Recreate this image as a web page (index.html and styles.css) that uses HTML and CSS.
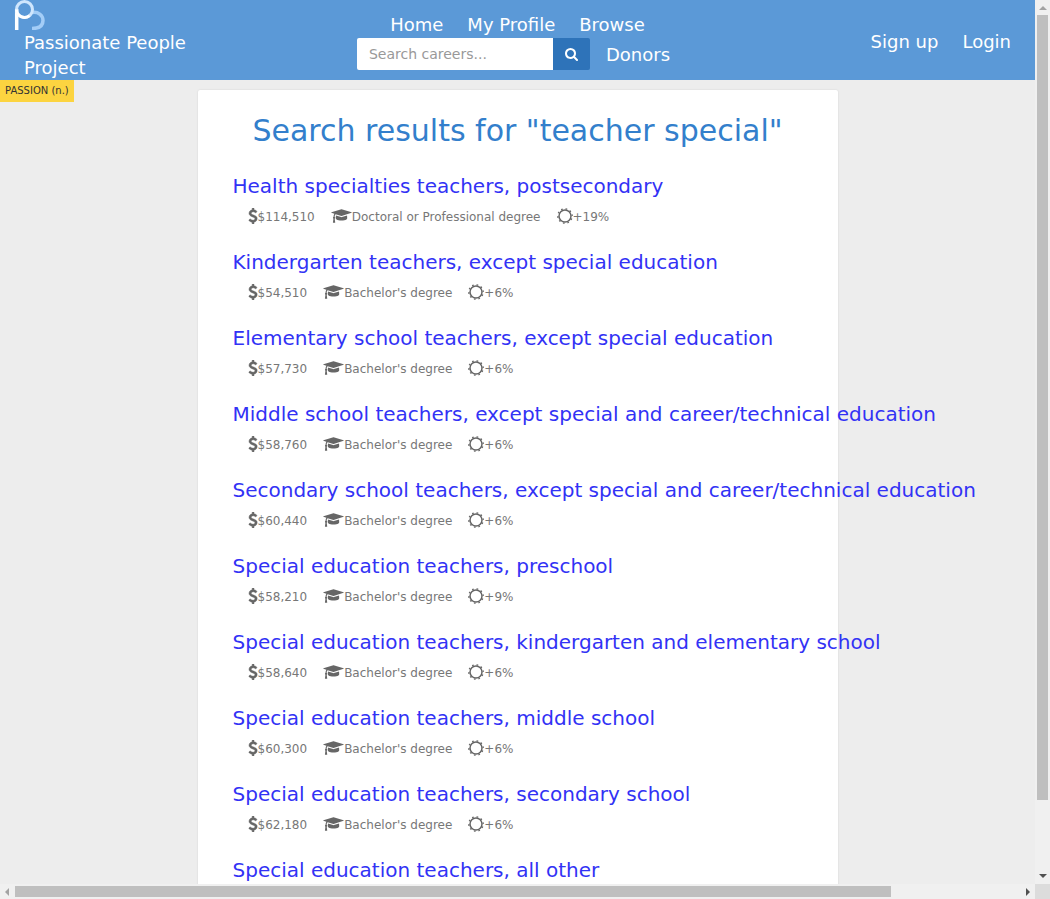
FILE: index.html
```html
<!DOCTYPE html>
<html lang="en">
<head>
<meta charset="utf-8">
<title>Passionate People Project</title>
<link rel="stylesheet" href="styles.css">
</head>
<body>
<svg class="sprite" aria-hidden="true">
  <symbol id="dollar" viewBox="0 0 1024 1792"><path stroke="currentColor" stroke-width="50" d="M978 1185q0 153-99.500 263.500T620 1585v175q0 14-9 23t-23 9H453q-13 0-22.500-9.500T421 1760v-175q-66-9-127.500-31T192 1509.500t-74-48-46.500-37.500T54 1406q-17-21-2-41l103-135q7-10 23-12 15-2 24 9l2 2q113 99 243 125 37 8 74 8 81 0 142.500-43t61.500-122q0-28-15-53t-33.500-42-58.500-37.500-66-32-80-32.500q-39-16-61.500-25T349 942.500 286.500 911 230 875.500t-53.500-42.500-43.500-49-35.500-58-21-66.500T68 581q0-138 98-242t255-134V32q0-13 9.500-22.500T453 0h135q14 0 23 9t9 23v176q57 6 110.500 23t87 33.500T881 302t39 29 15 14q17 18 5 38l-81 146q-8 15-23 16-14 3-27-7-3-3-14.500-12t-39-26.500-58.500-32-74.500-26T537 430q-95 0-155 43t-60 111q0 26 8.500 48t29.500 41.500 39.500 33 56 31 60.500 27 70 27.500q53 20 81 31.500t76 35 75.500 42.500 62 50 53 63.500 31.500 76.500 13 94z"/></symbol>
  <symbol id="cap" viewBox="0 0 2304 1792"><path d="M1774 836l18 316q4 69-82 128t-235 93.500-323 34.500-323-34.500T594 1280t-82-128l18-316 574 181q22 7 48 7t48-7zm530-324q0 23-22 31l-1120 352q-4 1-10 1t-10-1L490 690q-43 34-71 111.500T385 980q63 36 63 109 0 69-58 107l58 433q2 14-8 25-9 11-24 11H224q-15 0-24-11-10-11-8-25l58-433q-58-38-58-107 0-73 65-111 11-207 98-330L22 543q-22-8-22-31t22-31L1142 129q4-1 10-1t10 1l1120 352q22 8 22 31z"/></symbol>
  <symbol id="sun" viewBox="0 0 16 16"><circle cx="8" cy="8" r="6" fill="none" stroke="currentColor" stroke-width="1.500"/><circle cx="8" cy="8" r="7.200" fill="none" stroke="currentColor" stroke-width="1.300" stroke-dasharray="1.700 2.824" stroke-dashoffset="1.980"/></symbol>
  <symbol id="search" viewBox="0 0 1664 1792"><path d="M1152 832q0-185-131.500-316.500T704 384 387.500 515.500 256 832t131.500 316.500T704 1280t316.500-131.500T1152 832zm512 832q0 52-38 90t-90 38q-54 0-90-38l-343-342q-179 124-399 124-143 0-273.500-55.500t-225-150-150-225T0 832t55.500-273.500 150-225 225-150T704 128t273.500 55.500 225 150 150 225T1408 832q0 220-124 399l343 343q37 37 37 90z"/></symbol>
</svg>
<div class="window">
  <div class="page">
    <header class="header">
      <a class="brand" href="#">
        <svg class="logo" viewBox="0 0 32 30" aria-hidden="true"><path d="M18 12.500c6-1 11 2.500 11 8s-4 8-11 8" fill="none" stroke="#a3cdf7" stroke-width="3.500"/><path d="M2.700 30V9" stroke="#fff" stroke-width="3.500"/><circle cx="10.500" cy="9.500" r="8" fill="none" stroke="#cfe6fd" stroke-width="3"/><path d="M2.500 9.500a8 8 0 0 0 13 6.200" fill="none" stroke="#fff" stroke-width="3"/></svg>
        <span class="brand-name">Passionate People Project</span>
      </a>
      <nav class="nav">
        <div class="nav-row"><a href="#">Home</a><a href="#">My Profile</a><a href="#">Browse</a></div>
        <div class="nav-row">
          <form class="search">
            <input type="text" placeholder="Search careers..." aria-label="Search careers">
            <button type="button" aria-label="Search"><svg class="icon-search"><use href="#search"/></svg></button>
          </form>
          <a href="#">Donors</a>
        </div>
      </nav>
      <div class="account"><a href="#">Sign up</a><a href="#">Login</a></div>
    </header>
    <div class="content">
      <span class="tag">PASSION (n.)</span>
      <main class="card">
        <h1>Search results for "teacher special"</h1>
        <ul class="results" id="results"></ul>
      </main>
    </div>
  </div>
  <div class="bar bar-v" aria-hidden="true"><i class="arrow up"></i><i class="thumb"></i><i class="arrow down"></i></div>
  <div class="bar bar-h" aria-hidden="true"><i class="arrow left"></i><i class="thumb"></i><i class="arrow right"></i></div>
  <div class="corner"></div>
</div>
<script src="results.js"></script>
</body>
</html>
```
FILE: results.js
```js
const results = [
  ["Health specialties teachers, postsecondary", "$114,510", "Doctoral or Professional degree", "+19%"],
  ["Kindergarten teachers, except special education", "$54,510", "Bachelor's degree", "+6%"],
  ["Elementary school teachers, except special education", "$57,730", "Bachelor's degree", "+6%"],
  ["Middle school teachers, except special and career/technical education", "$58,760", "Bachelor's degree", "+6%"],
  ["Secondary school teachers, except special and career/technical education", "$60,440", "Bachelor's degree", "+6%"],
  ["Special education teachers, preschool", "$58,210", "Bachelor's degree", "+9%"],
  ["Special education teachers, kindergarten and elementary school", "$58,640", "Bachelor's degree", "+6%"],
  ["Special education teachers, middle school", "$60,300", "Bachelor's degree", "+6%"],
  ["Special education teachers, secondary school", "$62,180", "Bachelor's degree", "+6%"],
  ["Special education teachers, all other", "", "", ""]
];
const fact = (icon, text) => text ? `<span class="fact"><svg class="icon ${icon}"><use href="#${icon}"/></svg>${text}</span>` : "";
document.getElementById("results").innerHTML = results.map(([title, pay, degree, growth]) =>
  `<li><a class="title" href="#">${title}</a><div class="facts">${fact("dollar", pay)}${fact("cap", degree)}${fact("sun", growth)}</div></li>`
).join("");
```
FILE: styles.css
```css
* { box-sizing: border-box; }
body { margin: 0; font-family: "DejaVu Sans", sans-serif; background: #ededed; }
a { text-decoration: none; color: inherit; }
.sprite { position: absolute; width: 0; height: 0; }
.window { display: grid; grid-template: minmax(0, 1fr) 15px / minmax(0, 1fr) 15px; height: 100vh; overflow: hidden; }
.page { overflow: hidden; }

.header { display: grid; grid-template-columns: 1fr auto 1fr; height: 80px; background: #5b99d7; color: #fff; font-size: 18px; }
.brand { justify-self: start; width: 230px; }
.logo { display: block; width: 32px; height: 30px; margin-left: 14px; }
.brand-name { display: block; padding: 0 24px; line-height: 25px; }
.nav { padding-top: 9px; }
.nav-row { display: flex; justify-content: center; align-items: center; height: 30px; }
.nav-row a, .account a { padding: 0 12px; }
.search { display: flex; height: 32px; margin: 0 4px; }
.search input { width: 196px; padding: 0 12px; border: 0; border-radius: 2px 0 0 2px; background: #fff; font: 14px "DejaVu Sans", sans-serif; }
.search input::placeholder { color: #999; opacity: 1; }
.search button { display: grid; place-items: center; width: 37px; padding: 0; border: 0; border-radius: 0 2px 2px 0; background: #2e73b9; color: #fff; }
.icon-search { width: 13px; height: 14px; fill: currentColor; }
.account { display: flex; justify-self: end; align-self: center; padding: 3px 12px 0 0; }

.content { position: relative; padding-top: 10px; }
.tag { position: absolute; top: 0; left: 0; padding: 0 5px; background: #fcd440; color: #333; font-size: 10px; line-height: 22px; }
.card { max-width: 640px; margin: 0 auto; padding: 23px 35px 20px; border-radius: 2px; background: #fff; box-shadow: 0 0 2px rgba(0, 0, 0, .12); }
h1 { margin: 0 0 23px; color: #337fcc; font-size: 30px; font-weight: 400; line-height: 36px; text-align: center; }
.results { margin: 0; padding: 0; list-style: none; }
.results li { height: 76px; white-space: nowrap; }
.title { display: block; color: #3232f5; font-size: 20px; line-height: 28px; }
.facts { display: flex; gap: 16px; margin-top: 9px; padding-left: 15px; color: #777; font-size: 12px; line-height: 16px; }
.fact { display: flex; align-items: center; }
.icon { height: 16px; margin-top: -2px; color: #666; fill: currentColor; overflow: visible; }
.dollar { width: 10px; }
.cap { width: 21px; }
.sun { width: 16px; }

.bar { display: flex; align-items: center; justify-content: space-between; background: #f0f0f0; }
.bar-v { flex-direction: column; padding: 6px 0; }
.bar-h { padding: 0 5px; }
.bar .thumb { background: #bfbfbf; }
.bar-v .thumb { flex: 0 0 90%; width: 11px; }
.bar-h .thumb { flex: 0 0 85.5%; height: 11px; }
.corner { background: #dcdcdc; }
.arrow { border: 4px solid transparent; }
.up { margin-bottom: 5px; border-top: 0; border-bottom-color: #a3a3a3; }
.down { margin-top: auto; border-bottom: 0; border-top-color: #505050; }
.left { margin-right: 6px; border-left: 0; border-right-color: #a3a3a3; }
.right { margin-left: auto; border-right: 0; border-left-color: #505050; }
```
